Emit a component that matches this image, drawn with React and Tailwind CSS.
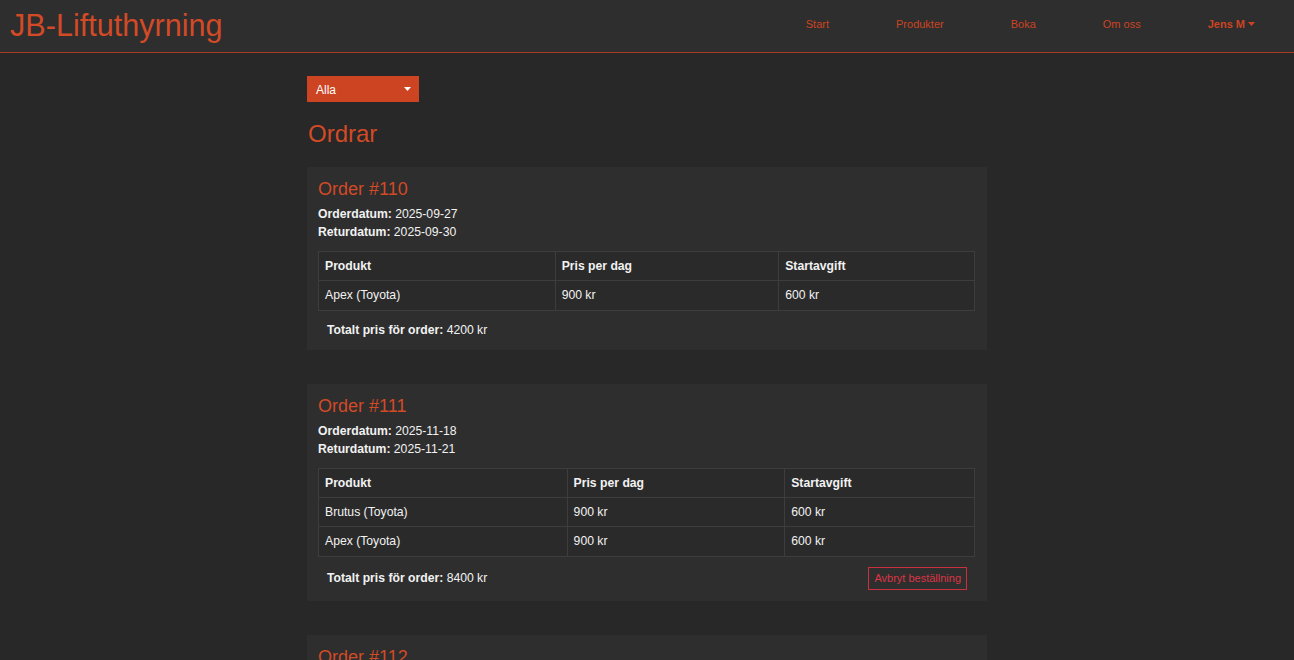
import React from "react";

const orders = [
  {
    id: 110,
    orderdatum: "2025-09-27",
    returdatum: "2025-09-30",
    widths: ["w-[237px]", "w-[224px]", "w-[196px]"],
    rows: [["Apex (Toyota)", "900 kr", "600 kr"]],
    total: "4200 kr",
    cancel: false,
  },
  {
    id: 111,
    orderdatum: "2025-11-18",
    returdatum: "2025-11-21",
    widths: ["w-[249px]", "w-[218px]", "w-[190px]"],
    rows: [
      ["Brutus (Toyota)", "900 kr", "600 kr"],
      ["Apex (Toyota)", "900 kr", "600 kr"],
    ],
    total: "8400 kr",
    cancel: true,
  },
  {
    id: 112,
    orderdatum: "2025-12-02",
    returdatum: "2025-12-05",
    widths: ["w-[237px]", "w-[224px]", "w-[196px]"],
    rows: [["Apex (Toyota)", "900 kr", "600 kr"]],
    total: "4200 kr",
    cancel: true,
  },
];

function Caret({ className }) {
  return (
    <svg width="7" height="4" viewBox="0 0 7 4" className={className}>
      <path d="M0 0h7L3.5 4z" fill="currentColor" />
    </svg>
  );
}

function OrderCard({ o }) {
  return (
    <div className="bg-[#2e2e2e] pt-[11px] pb-[11px] pl-[11px] pr-[12px]">
      <h3 className="text-[18px] leading-[22px] text-[#d24a26] font-normal">
        Order #{o.id}
      </h3>
      <div className="mt-[5px] text-[12.2px] leading-[18px] text-[#f2f2f2]">
        <div>
          <span className="font-bold">Orderdatum:</span> {o.orderdatum}
        </div>
        <div>
          <span className="font-bold">Returdatum:</span> {o.returdatum}
        </div>
      </div>
      <table className="mt-[10px] w-full border-collapse text-[12.2px] text-[#f2f2f2]">
        <thead>
          <tr className="bg-[#2a2a2a]">
            {["Produkt", "Pris per dag", "Startavgift"].map((h, i) => (
              <th
                key={h}
                className={`${o.widths[i]} border border-[#3d3d3d] px-[6px] py-[6px] leading-[16px] text-left font-bold`}
              >
                {h}
              </th>
            ))}
          </tr>
        </thead>
        <tbody>
          {o.rows.map((r, ri) => (
            <tr key={ri} className="bg-[#2a2a2a]">
              {r.map((c, ci) => (
                <td
                  key={ci}
                  className="border border-[#3d3d3d] px-[6px] py-[6px] leading-[16.5px]"
                >
                  {c}
                </td>
              ))}
            </tr>
          ))}
        </tbody>
      </table>
      <div className="mt-[10px] flex items-center justify-between pl-[9px] pr-[8px] min-h-[18px]">
        <div className="text-[12.2px] leading-[18px] text-[#f2f2f2]">
          <span className="font-bold">Totalt pris för order:</span> {o.total}
        </div>
        {o.cancel && (
          <button className="h-[23px] border border-[#c9303f] px-[5px] text-[11px] leading-[21px] text-[#dc3545] bg-transparent">
            Avbryt beställning
          </button>
        )}
      </div>
    </div>
  );
}

export default function App() {
  return (
    <div
      className="min-h-[660px] bg-[#282828]"
      style={{ fontFamily: '"Liberation Sans", Arial, sans-serif' }}
    >
      <nav className="flex h-[53px] items-center justify-between border-b border-[#a63b1f] bg-[#2e2e2e] pl-[10px] pr-[39px]">
        <div className="text-[30.6px] leading-[36px] text-[#d24a26] -mt-[2px]">
          JB-Liftuthyrning
        </div>
        <ul className="-mt-[4px] flex items-center gap-[67px] text-[11px] text-[#cc4422]">
          <li>Start</li>
          <li>Produkter</li>
          <li>Boka</li>
          <li>Om oss</li>
          <li className="flex items-center gap-[3px] font-bold">
            Jens M <Caret className="text-[#cc4422]" />
          </li>
        </ul>
      </nav>
      <main className="mx-auto w-[680px] pt-[23px]">
        <div className="flex h-[26px] w-[112px] items-center justify-between bg-[#cc4422] pl-[9px] pr-[8px] text-[12px] text-white">
          <span className="mt-[1px]">Alla</span>
          <Caret className="text-white" />
        </div>
        <h1 className="mt-[17px] text-[24px] leading-[29px] text-[#d24a26] font-normal pl-[1px]">
          Ordrar
        </h1>
        <div className="mt-[19px] flex flex-col gap-[34px]">
          {orders.map((o) => (
            <OrderCard key={o.id} o={o} />
          ))}
        </div>
      </main>
    </div>
  );
}
